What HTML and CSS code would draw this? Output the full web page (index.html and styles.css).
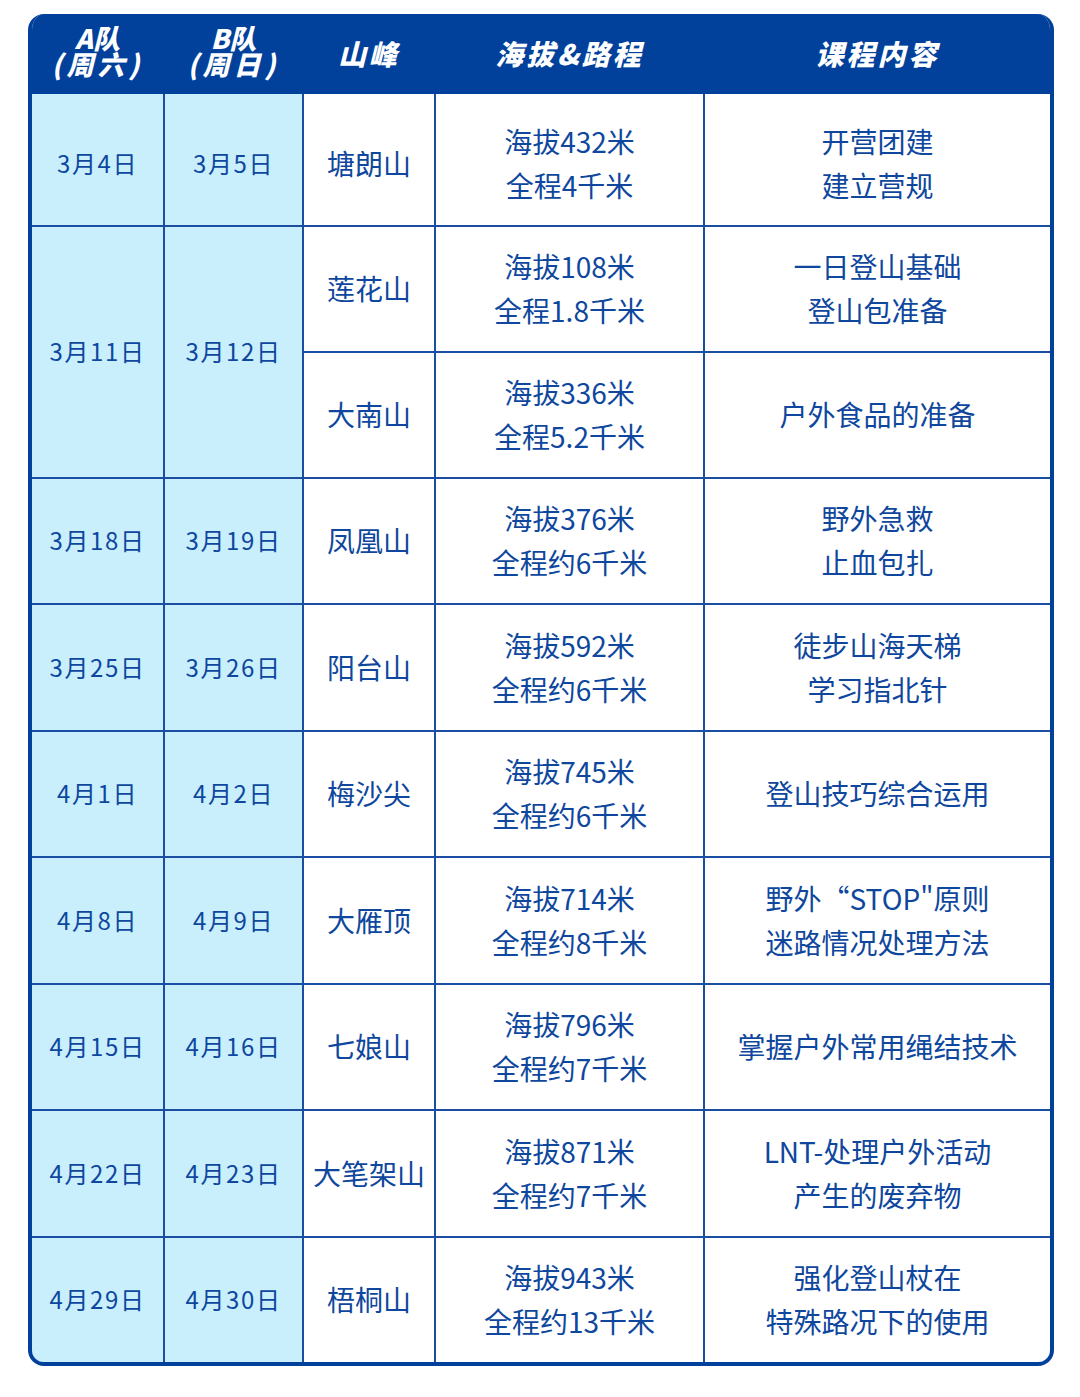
FILE: index.html
```html
<!DOCTYPE html>
<html lang="zh">
<head>
<meta charset="utf-8">
<title>课程安排</title>
<link rel="stylesheet" href="styles.css">
</head>
<body>
<div class="schedule">
  <div class="head">
    <div class="hcell two"><span class="l1">A队</span><span class="l2">(周六)</span></div>
    <div class="hcell two"><span class="l1">B队</span><span class="l2">(周日)</span></div>
    <div class="hcell">山峰</div>
    <div class="hcell">海拔&amp;路程</div>
    <div class="hcell">课程内容</div>
  </div>
  <div class="grid">
    <div class="cell date first">3月4日</div>
    <div class="cell date first">3月5日</div>
    <div class="cell first">塘朗山</div>
    <div class="cell first">海拔432米<br>全程4千米</div>
    <div class="cell first">开营团建<br>建立营规</div>

    <div class="cell date span2">3月11日</div>
    <div class="cell date span2">3月12日</div>
    <div class="cell">莲花山</div>
    <div class="cell">海拔108米<br>全程1.8千米</div>
    <div class="cell">一日登山基础<br>登山包准备</div>
    <div class="cell">大南山</div>
    <div class="cell">海拔336米<br>全程5.2千米</div>
    <div class="cell">户外食品的准备</div>

    <div class="cell date">3月18日</div>
    <div class="cell date">3月19日</div>
    <div class="cell">凤凰山</div>
    <div class="cell">海拔376米<br>全程约6千米</div>
    <div class="cell">野外急救<br>止血包扎</div>

    <div class="cell date">3月25日</div>
    <div class="cell date">3月26日</div>
    <div class="cell">阳台山</div>
    <div class="cell">海拔592米<br>全程约6千米</div>
    <div class="cell">徒步山海天梯<br>学习指北针</div>

    <div class="cell date">4月1日</div>
    <div class="cell date">4月2日</div>
    <div class="cell">梅沙尖</div>
    <div class="cell">海拔745米<br>全程约6千米</div>
    <div class="cell">登山技巧综合运用</div>

    <div class="cell date">4月8日</div>
    <div class="cell date">4月9日</div>
    <div class="cell">大雁顶</div>
    <div class="cell">海拔714米<br>全程约8千米</div>
    <div class="cell">野外“STOP"原则<br>迷路情况处理方法</div>

    <div class="cell date">4月15日</div>
    <div class="cell date">4月16日</div>
    <div class="cell">七娘山</div>
    <div class="cell">海拔796米<br>全程约7千米</div>
    <div class="cell">掌握户外常用绳结技术</div>

    <div class="cell date">4月22日</div>
    <div class="cell date">4月23日</div>
    <div class="cell">大笔架山</div>
    <div class="cell">海拔871米<br>全程约7千米</div>
    <div class="cell">LNT-处理户外活动<br>产生的废弃物</div>

    <div class="cell date">4月29日</div>
    <div class="cell date">4月30日</div>
    <div class="cell">梧桐山</div>
    <div class="cell">海拔943米<br>全程约13千米</div>
    <div class="cell">强化登山杖在<br>特殊路况下的使用</div>
  </div>
</div>
</body>
</html>
```

FILE: styles.css
```css
html, body {
  margin: 0;
  padding: 0;
  background: #ffffff;
}

body {
  font-family: "Noto Sans CJK SC", "Noto Sans", sans-serif;
}

.schedule {
  margin: 14px 0 0 28px;
  width: 1018px;
  border: 4px solid #02419b;
  border-top: 0;
  border-radius: 16px;
  overflow: hidden;
}

.head {
  display: grid;
  grid-template-columns: 131px 137px 130px 267px 345px;
  column-gap: 2px;
  height: 80px;
  background: #02419b;
}

.hcell {
  display: flex;
  flex-direction: column;
  align-items: center;
  justify-content: center;
  color: #ffffff;
  font-size: 28px;
  font-weight: 900;
  font-style: italic;
  letter-spacing: 3px;
  line-height: 28px;
  padding-bottom: 2px;
}

.hcell.two {
  padding-bottom: 4px;
}

.hcell .l1 {
  display: block;
  font-size: 27px;
  line-height: 24px;
  height: 24px;
  letter-spacing: 0;
}

.hcell .l2 {
  display: block;
  font-size: 27px;
  line-height: 28px;
  height: 28px;
  letter-spacing: 4px;
}

.grid {
  display: grid;
  grid-template-columns: 131px 137px 130px 267px 345px;
  grid-template-rows: 131px 124px 124px 124px 125px 124px 125px 124px 125px 124px;
  gap: 2px;
  background: #1a4ea3;
}

.cell {
  display: flex;
  align-items: center;
  justify-content: center;
  text-align: center;
  background: #ffffff;
  color: #0e479d;
  font-size: 28px;
  line-height: 44px;
  padding-bottom: 2px;
}

.cell.first {
  padding-top: 6px;
  padding-bottom: 0;
}

.cell.date {
  background: #c9effd;
  font-size: 24px;
  letter-spacing: 1.6px;
}

.cell.span2 {
  grid-row: span 2;
}
```
